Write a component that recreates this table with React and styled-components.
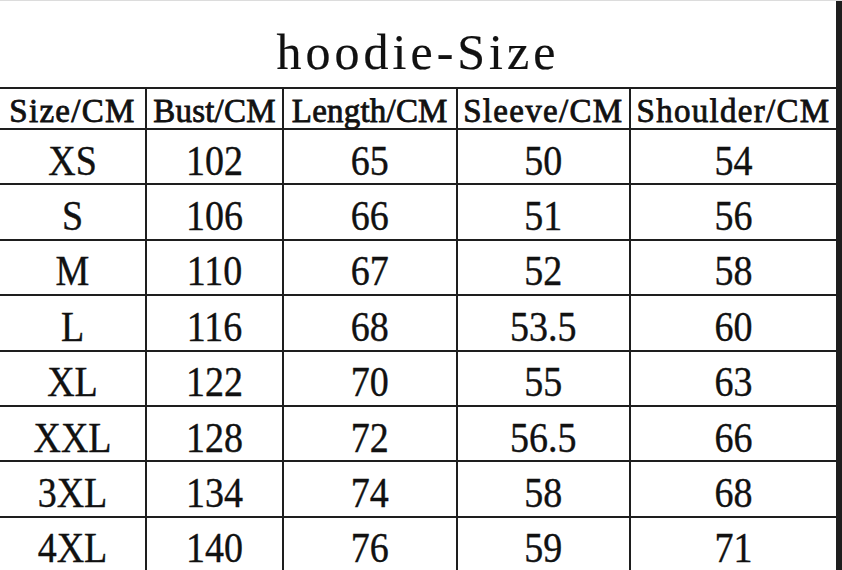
import React from 'react';
import styled, { createGlobalStyle } from 'styled-components';

const GlobalStyle = createGlobalStyle`
    html, body {
        margin: 0;
        padding: 0;
        background: #ffffff;
        overflow: hidden;
    }
`;

const Page = styled.div`
    width: 842px;
    height: 570px;
    overflow: hidden;
    border-top: 1px solid #dcdcdc;
    box-sizing: border-box;
`;

const Chart = styled.div`
    width: 840px;
    margin-left: -2px;
    display: grid;
    grid-template-columns: 145px 135px 171.5px 171.5px 205px;
    gap: 2px;
    padding: 0 2px 2px 2px;
    background-color: #1e1e1e;
`;

const Cell = styled.div`
    background-color: #ffffff;
    display: flex;
    align-items: center;
    justify-content: center;
    color: #111111;
    white-space: nowrap;
`;

const TitleCell = styled(Cell)`
    grid-column: 1 / -1;
`;

const HeadCell = styled(Cell)`
    padding-top: 4px;
    box-sizing: border-box;
`;

const TitleText = styled.span`
    display: inline-block;
    font-family: "Liberation Serif", serif;
    font-size: 50px;
    letter-spacing: 4px;
    margin-top: 15px;
    -webkit-text-stroke: 0.2px #111111;
`;

const HeadText = styled.span`
    display: inline-block;
    font-family: "Liberation Serif", serif;
    font-size: 33px;
    line-height: 1;
    letter-spacing: ${(p) => (p.$tight ? '0.2px' : '1.3px')};
    transform: scaleY(1.05);
    -webkit-text-stroke: 0.8px #111111;
`;

const ValueText = styled.span`
    display: inline-block;
    font-family: "Liberation Serif", serif;
    font-size: 38px;
    line-height: 1;
    transform: scaleY(1.12);
    margin-top: 6px;
    -webkit-text-stroke: 0.35px #111111;
`;

const headers = [
    { label: 'Size/CM' },
    { label: 'Bust/CM', tight: true },
    { label: 'Length/CM', tight: true },
    { label: 'Sleeve/CM' },
    { label: 'Shoulder/CM' },
];

const rows = [
    ['XS', '102', '65', '50', '54'],
    ['S', '106', '66', '51', '56'],
    ['M', '110', '67', '52', '58'],
    ['L', '116', '68', '53.5', '60'],
    ['XL', '122', '70', '55', '63'],
    ['XXL', '128', '72', '56.5', '66'],
    ['3XL', '134', '74', '58', '68'],
    ['4XL', '140', '76', '59', '71'],
];

const App = () => {
    return (
        <Page>
            <GlobalStyle />
            <Chart style={{ gridTemplateRows: `86px 39px repeat(${rows.length}, 53.4px)` }}>
                <TitleCell>
                    <TitleText>hoodie-Size</TitleText>
                </TitleCell>
                {headers.map((h) => (
                    <HeadCell key={h.label}>
                        <HeadText $tight={h.tight}>{h.label}</HeadText>
                    </HeadCell>
                ))}
                {rows.map((row) =>
                    row.map((v, i) => (
                        <Cell key={row[0] + i}>
                            <ValueText>{v}</ValueText>
                        </Cell>
                    ))
                )}
            </Chart>
        </Page>
    );
};

export default App;
